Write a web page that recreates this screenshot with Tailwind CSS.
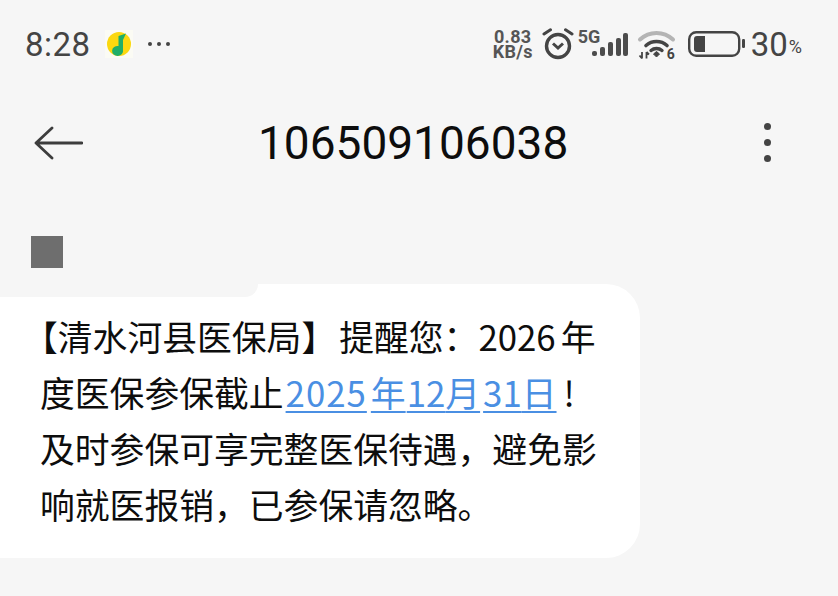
<!DOCTYPE html>
<html lang="zh-CN">
<head>
  <meta charset="UTF-8">
  <meta name="viewport" content="width=device-width, initial-scale=1.0">
  <title>106509106038</title>
  <script src="https://cdn.jsdelivr.net/npm/@tailwindcss/browser@4"></script>
</head>
<body class="bg-[#f6f6f6] w-[838px] h-[596px] overflow-hidden font-['Noto_Sans','Noto_Sans_CJK_SC',sans-serif]">
  <!-- Status bar -->
  <div class="h-[88px] flex items-center pl-[25px] pr-[36px] text-[#444444]">
    <span class="text-[33px] leading-none font-['Roboto',sans-serif] tracking-[0.5px]">8:28</span>
    <svg class="ml-[14px]" width="28" height="28" viewBox="0 0 28 28">
      <rect width="28" height="28" fill="#fbfbf4"/>
      <circle cx="14" cy="14" r="12" fill="#fbd80f"/>
      <path d="M13.5 6L21 3.5L18 10V20A5.5 5 0 1 1 13.5 16Z" fill="#1fae68"/>
    </svg>
    <div class="ml-[15px] flex gap-[5px]">
      <span class="w-[4px] h-[4px] rounded-full bg-[#444444]"></span>
      <span class="w-[4px] h-[4px] rounded-full bg-[#444444]"></span>
      <span class="w-[4px] h-[4px] rounded-full bg-[#444444]"></span>
    </div>
    <div class="ml-auto flex items-center">
      <div class="flex flex-col items-center font-['Roboto',sans-serif] font-bold text-[18px] leading-[15px] tracking-[0.3px] text-[#555555]">
        <span>0.83</span>
        <span>KB/s</span>
      </div>
      <svg class="ml-[8px]" width="34" height="32" viewBox="0 0 34 32" fill="none" stroke="#444444">
        <circle cx="17" cy="18" r="11.5" stroke-width="3.4"/>
        <path d="M12 15.5L17 20L22 15.5" stroke-width="3"/>
        <path d="M3 6L9.5 1.8M31 6L24.5 1.8" stroke-width="3" stroke-linecap="round"/>
      </svg>
      <div class="ml-[3px] relative w-[52px] h-[32px]">
        <span class="absolute left-0 top-[-3px] font-['Roboto',sans-serif] font-bold text-[18px] leading-[24px] text-[#555555]">5G</span>
        <svg class="absolute left-0 top-0" width="52" height="32" viewBox="0 0 52 32" fill="#4c4c4c">
          <rect x="14" y="23" width="5" height="5" rx="2"/>
          <rect x="22" y="19" width="5" height="9" rx="2"/>
          <rect x="30" y="14" width="5" height="14" rx="2"/>
          <rect x="38" y="10" width="5" height="18" rx="2"/>
          <rect x="45" y="5" width="5" height="23" rx="2"/>
        </svg>
      </div>
      <div class="ml-[7px] relative w-[40px] h-[34px]">
        <svg width="40" height="34" viewBox="0 0 40 34" fill="none">
          <path d="M3 12.5A24 24 0 0 1 36 12.5" stroke="#b4b4b4" stroke-width="4" stroke-linecap="round"/>
          <path d="M9 18.5A16 16 0 0 1 30 18.5" stroke="#444444" stroke-width="3.6" stroke-linecap="round"/>
          <path d="M14 23.5A8.5 8.5 0 0 1 25 23.5" stroke="#444444" stroke-width="3.4" stroke-linecap="round"/>
          <path d="M16.5 27L19.5 24.5L22.5 27L19.5 30Z" fill="#444444" stroke="#444444"/>
          <path d="M5 25V31.5M9.5 25V31.5M2.5 28.5L5 31.5M12 27.5L9.5 25" stroke="#444444" stroke-width="1.8"/>
        </svg>
        <span class="absolute left-[30px] top-[20px] font-['Roboto',sans-serif] font-bold text-[14px] leading-[14px] text-[#444444]">6</span>
      </div>
      <svg class="ml-[11px]" width="57" height="26" viewBox="0 0 57 26" fill="none">
        <rect x="1.2" y="1.2" width="50" height="23.6" rx="7" stroke="#444444" stroke-width="2.4"/>
        <path d="M6 8A3 3 0 0 1 9 5H17V21H9A3 3 0 0 1 6 18Z" fill="#444444"/>
        <rect x="54" y="8" width="3" height="9" rx="1.2" fill="#444444"/>
      </svg>
      <span class="ml-[6px] text-[33px] leading-none font-['Roboto',sans-serif]">30</span>
      <span class="ml-[1px] mt-[6px] text-[18px] leading-none font-['Roboto',sans-serif]">%</span>
    </div>
  </div>

  <!-- Title bar -->
  <div class="h-[110px] flex items-center pl-[34px] pr-[67px]">
    <svg width="49" height="34" viewBox="0 0 49 34" fill="none" stroke="#3d3d3d" stroke-width="2.8" stroke-linecap="round" stroke-linejoin="round">
      <path d="M48 17H2M18 2L2 17L18 32"/>
    </svg>
    <h1 class="ml-[175px] text-[46px] leading-none text-[#0d0d0d] font-['Roboto',sans-serif]">106509106038</h1>
    <div class="ml-auto mb-[2px] flex flex-col gap-[9px]">
      <span class="w-[7px] h-[7px] rounded-full bg-[#444444]"></span>
      <span class="w-[7px] h-[7px] rounded-full bg-[#444444]"></span>
      <span class="w-[7px] h-[7px] rounded-full bg-[#444444]"></span>
    </div>
  </div>

  <!-- Sender -->
  <div class="h-[86px] pl-[31px] pt-[38px]">
    <div class="w-[32px] h-[32px] bg-[#6e6e6e]"></div>
  </div>

  <!-- Message bubble -->
  <div class="relative w-[640px] h-[274px] bg-white rounded-r-[34px] pl-[40px] pt-[24px] text-[34.8px] leading-[56px] text-[#0d0d0d] font-['Noto_Sans_CJK_SC',sans-serif]">
    <div class="absolute left-0 top-0 w-[258px] h-[13px] bg-[#f6f6f6] rounded-br-[20px]"></div>
    <p class="relative whitespace-nowrap"><span class="ml-[-17px]">【</span>清水河县医保局<span class="mr-[3px]">】</span>提醒您：2026<span class="ml-[5px]">年</span><br>度医保参保截止<a class="pl-[2px] text-[#4a8fe3] underline decoration-2 underline-offset-4 [text-decoration-skip-ink:none]"><span class="tracking-[1px]">2025</span><span class="ml-[4px]">年</span><span class="ml-[1px]">12</span><span>月</span><span class="ml-[3px]">31</span><span>日</span></a><span class="ml-[7px]">!</span><br>及时参保可享完整医保待遇，避免影<br>响就医报销，已参保请忽略。</p>
  </div>
</body>
</html>
